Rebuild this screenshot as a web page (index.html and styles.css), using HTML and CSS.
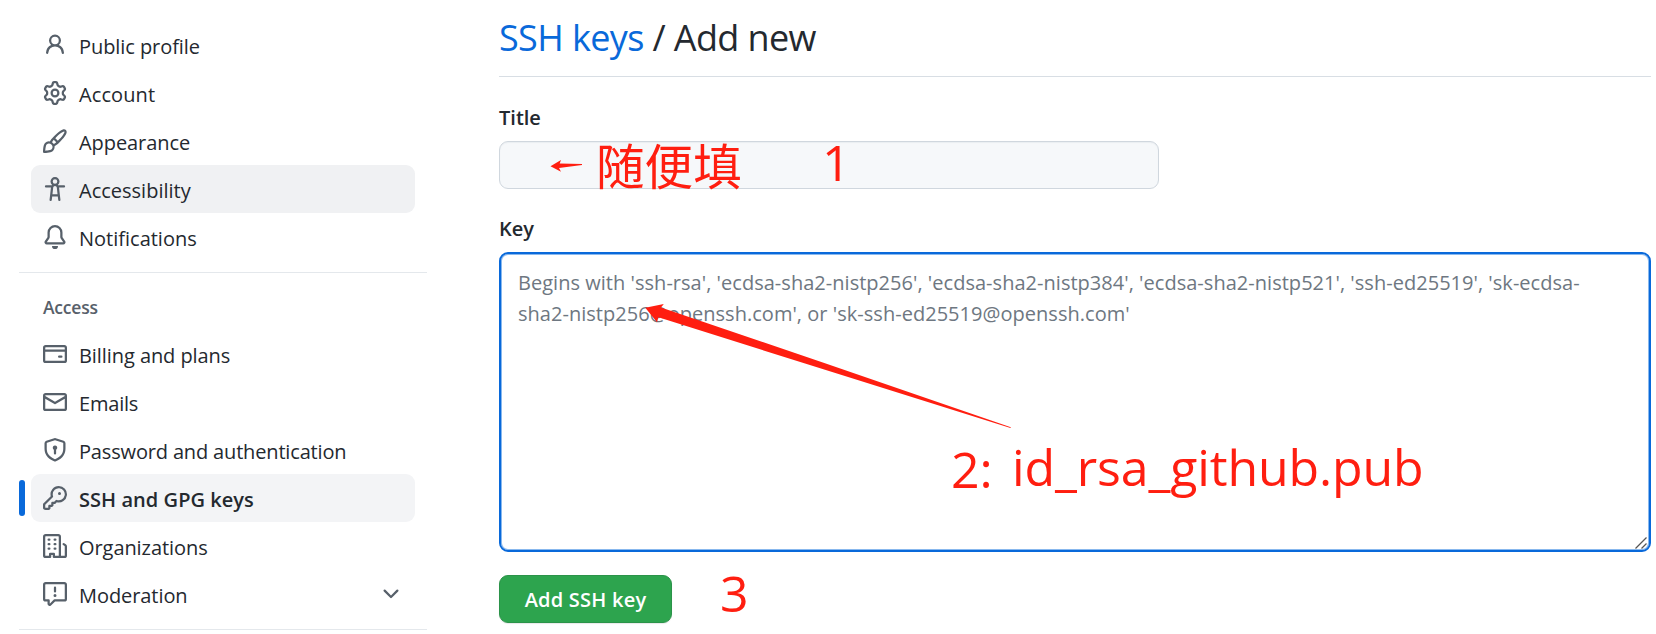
FILE: index.html
```html
<!DOCTYPE html>
<html lang="en">
<head>
<meta charset="utf-8">
<title>Add new SSH keys</title>
<link rel="stylesheet" href="styles.css">
</head>
<body>
<div class="page">
  <nav class="sidebar">
    <ul class="nav-list">
      <li class="nav-item"><svg class="icon" viewBox="0 0 16 16"><path d="M10.561 8.073a6.005 6.005 0 0 1 3.432 5.142.75.75 0 1 1-1.498.07 4.5 4.5 0 0 0-8.99 0 .75.75 0 0 1-1.498-.07 6.004 6.004 0 0 1 3.431-5.142 3.999 3.999 0 1 1 5.123 0ZM10.5 5a2.5 2.5 0 1 0-5 0 2.5 2.5 0 0 0 5 0Z"/></svg><span class="label profile">Public profile</span></li>
      <li class="nav-item"><svg class="icon" viewBox="0 0 16 16"><path d="M8 0a8.2 8.2 0 0 1 .701.031C9.444.095 9.99.645 10.16 1.29l.288 1.107c.018.066.079.158.212.224.231.114.454.243.668.386.123.082.233.09.299.071l1.103-.303c.644-.176 1.392.021 1.82.63.27.385.506.792.704 1.218.315.675.111 1.422-.364 1.891l-.814.806c-.049.048-.098.147-.088.294.016.257.016.515 0 .772-.01.147.038.246.088.294l.814.806c.475.469.679 1.216.364 1.891a7.977 7.977 0 0 1-.704 1.217c-.428.61-1.176.807-1.82.63l-1.102-.302c-.067-.019-.177-.011-.3.071a5.909 5.909 0 0 1-.668.386c-.133.066-.194.158-.211.224l-.29 1.106c-.168.646-.715 1.196-1.458 1.26a8.006 8.006 0 0 1-1.402 0c-.743-.064-1.289-.614-1.458-1.26l-.289-1.106c-.018-.066-.079-.158-.212-.224a5.738 5.738 0 0 1-.668-.386c-.123-.082-.233-.09-.299-.071l-1.103.303c-.644.176-1.392-.021-1.82-.63a8.12 8.12 0 0 1-.704-1.218c-.315-.675-.111-1.422.363-1.891l.815-.806c.05-.048.098-.147.088-.294a6.214 6.214 0 0 1 0-.772c.01-.147-.038-.246-.088-.294l-.815-.806C.635 6.045.431 5.298.746 4.623a7.92 7.92 0 0 1 .704-1.217c.428-.61 1.176-.807 1.82-.63l1.102.302c.067.019.177.011.3-.071.214-.143.437-.272.668-.386.133-.066.194-.158.211-.224l.29-1.106C6.009.645 6.556.095 7.299.03 7.53.01 7.764 0 8 0Zm-.571 1.525c-.036.003-.108.036-.137.146l-.289 1.105c-.147.561-.549.967-.998 1.189-.173.086-.34.183-.5.29-.417.278-.97.423-1.529.27l-1.103-.303c-.109-.03-.175.016-.195.045-.22.312-.412.644-.573.99-.014.031-.021.11.059.19l.815.806c.411.406.562.957.53 1.456a4.709 4.709 0 0 0 0 .582c.032.499-.119 1.05-.53 1.456l-.815.806c-.081.08-.073.159-.059.19.162.346.353.677.573.989.02.03.085.076.195.046l1.102-.303c.56-.153 1.113-.008 1.53.27.161.107.328.204.501.29.447.222.85.629.997 1.189l.289 1.105c.029.109.101.143.137.146a6.6 6.6 0 0 0 1.142 0c.036-.003.108-.036.137-.146l.289-1.105c.147-.561.549-.967.998-1.189.173-.086.34-.183.5-.29.417-.278.97-.423 1.529-.27l1.103.303c.109.029.175-.016.195-.045.22-.313.411-.644.573-.99.014-.031.021-.11-.059-.19l-.815-.806c-.411-.406-.562-.957-.53-1.456a4.709 4.709 0 0 0 0-.582c-.032-.499.119-1.05.53-1.456l.815-.806c.081-.08.073-.159.059-.19a6.464 6.464 0 0 0-.573-.989c-.02-.03-.085-.076-.195-.046l-1.102.303c-.56.153-1.113.008-1.53-.27a4.44 4.44 0 0 0-.501-.29c-.447-.222-.85-.629-.997-1.189l-.289-1.105c-.029-.11-.101-.143-.137-.146a6.6 6.6 0 0 0-1.142 0ZM11 8a3 3 0 1 1-6 0 3 3 0 0 1 6 0ZM9.5 8a1.5 1.5 0 1 0-3.001.001A1.5 1.5 0 0 0 9.5 8Z"/></svg><span class="label account">Account</span></li>
      <li class="nav-item"><svg class="icon" viewBox="0 0 16 16"><path d="M11.134 1.535c.7-.509 1.416-.942 2.076-1.155.649-.21 1.463-.267 2.069.34.603.601.568 1.411.368 2.07-.202.668-.624 1.39-1.125 2.096-1.011 1.424-2.496 2.987-3.775 4.249-1.098 1.084-2.132 1.839-3.04 2.3a3.744 3.744 0 0 1-1.055 3.217c-.431.431-1.065.691-1.657.861-.614.177-1.294.287-1.914.357A21.151 21.151 0 0 1 .797 16H.743l.007-.75H.749L.742 16a.75.75 0 0 1-.743-.742l.743-.008-.742.007v-.054a21.25 21.25 0 0 1 .13-2.284c.067-.647.187-1.287.358-1.914.17-.591.43-1.226.86-1.657a3.746 3.746 0 0 1 3.227-1.054c.466-.893 1.225-1.907 2.314-2.982 1.271-1.255 2.833-2.75 4.245-3.777ZM1.62 13.089c-.051.464-.086.929-.104 1.395.466-.018.932-.053 1.396-.104a10.511 10.511 0 0 0 1.668-.309c.526-.151.856-.325 1.011-.48a2.25 2.25 0 1 0-3.182-3.182c-.155.155-.329.485-.48 1.01a10.515 10.515 0 0 0-.309 1.67Zm10.396-10.34c-1.224.89-2.605 2.189-3.822 3.384l1.718 1.718c1.21-1.205 2.51-2.597 3.387-3.833.47-.662.78-1.227.912-1.662.134-.444.032-.551.009-.575h-.001V1.78c-.014-.014-.113-.113-.548.027-.432.14-.995.462-1.655.942Zm-4.832 7.266-.001.001a9.859 9.859 0 0 0 1.63-1.142L7.155 7.216a9.7 9.7 0 0 0-1.161 1.607c.482.302.889.71 1.19 1.192Z"/></svg><span class="label appearance">Appearance</span></li>
      <li class="nav-item hovered"><svg class="icon" viewBox="0 0 16 16"><path d="M9.923 5.302c.063.063.122.129.178.198H14A.75.75 0 0 1 14 7h-3.3l.578 5.163.362 2.997a.75.75 0 0 1-1.49.18L9.868 13H6.132l-.282 2.34a.75.75 0 0 1-1.49-.18l.362-2.997L5.3 7H2a.75.75 0 0 1 0-1.5h3.9a2.54 2.54 0 0 1 .176-.198 3 3 0 1 1 3.847 0ZM9.2 7.073h-.001a1.206 1.206 0 0 0-2.398 0L6.305 11.5h3.39ZM9.5 3a1.5 1.5 0 1 0-3.001.001A1.5 1.5 0 0 0 9.5 3Z"/></svg><span class="label accessibility">Accessibility</span></li>
      <li class="nav-item"><svg class="icon" viewBox="0 0 16 16"><path d="M8 16a2 2 0 0 0 1.985-1.75c.017-.137-.097-.25-.235-.25h-3.5c-.138 0-.252.113-.235.25A2 2 0 0 0 8 16ZM3 5a5 5 0 0 1 10 0v2.947c0 .05.015.098.042.139l1.703 2.555A1.519 1.519 0 0 1 13.482 13H2.518a1.516 1.516 0 0 1-1.263-2.36l1.703-2.554A.255.255 0 0 0 3 7.947Zm5-3.5A3.5 3.5 0 0 0 4.5 5v2.947c0 .346-.102.683-.294.97l-1.703 2.556a.017.017 0 0 0-.003.01l.001.006c0 .002.002.004.004.006l.006.004.007.001h10.964l.007-.001.006-.004.004-.006.001-.007a.017.017 0 0 0-.003-.01l-1.703-2.554a1.745 1.745 0 0 1-.294-.97V5A3.5 3.5 0 0 0 8 1.5Z"/></svg><span class="label notifications">Notifications</span></li>
    </ul>
    <h3 class="nav-heading">Access</h3>
    <ul class="nav-list">
      <li class="nav-item"><svg class="icon" viewBox="0 0 16 16"><path d="M10.75 9a.75.75 0 0 0 0 1.5h1.5a.75.75 0 0 0 0-1.5h-1.5Z"/><path d="M0 3.75C0 2.784.784 2 1.75 2h12.5c.966 0 1.75.784 1.75 1.75v8.5A1.75 1.75 0 0 1 14.25 14H1.75A1.75 1.75 0 0 1 0 12.25ZM14.5 6.5h-13v5.75c0 .138.112.25.25.25h12.5a.25.25 0 0 0 .25-.25Zm0-2.75a.25.25 0 0 0-.25-.25H1.75a.25.25 0 0 0-.25.25V5h13Z"/></svg><span class="label billing">Billing and plans</span></li>
      <li class="nav-item"><svg class="icon" viewBox="0 0 16 16"><path d="M1.75 2h12.5c.966 0 1.75.784 1.75 1.75v8.5A1.75 1.75 0 0 1 14.25 14H1.75A1.75 1.75 0 0 1 0 12.25v-8.5C0 2.784.784 2 1.75 2ZM1.5 5.809v6.442c0 .138.112.25.25.25h12.5a.25.25 0 0 0 .25-.25V5.809L8.38 9.397a.75.75 0 0 1-.76 0Zm13-1.74v-.319a.25.25 0 0 0-.25-.25H1.75a.25.25 0 0 0-.25.25v.319L8 7.88Z"/></svg><span class="label emails">Emails</span></li>
      <li class="nav-item"><svg class="icon" viewBox="0 0 16 16"><path d="m8.533.133 5.25 1.68A1.75 1.75 0 0 1 15 3.48V7c0 1.566-.32 3.182-1.303 4.682-.983 1.498-2.585 2.813-5.032 3.855a1.697 1.697 0 0 1-1.33 0c-2.447-1.042-4.049-2.357-5.032-3.855C1.32 10.182 1 8.566 1 7V3.48a1.755 1.755 0 0 1 1.217-1.667l5.25-1.68a1.748 1.748 0 0 1 1.066 0Zm-.61 1.429.001.001-5.25 1.68a.251.251 0 0 0-.174.237V7c0 1.36.275 2.666 1.057 3.859.784 1.194 2.121 2.342 4.366 3.298a.196.196 0 0 0 .154 0c2.245-.957 3.582-2.103 4.366-3.297C13.225 9.666 13.5 8.358 13.5 7V3.48a.25.25 0 0 0-.174-.238l-5.25-1.68a.25.25 0 0 0-.153 0ZM9.5 6.5c0 .536-.286 1.032-.75 1.3v2.45a.75.75 0 0 1-1.5 0V7.8A1.5 1.5 0 1 1 9.5 6.5Z"/></svg><span class="label password">Password and authentication</span></li>
      <li class="nav-item current"><svg class="icon" viewBox="0 0 16 16"><path d="M10.5 0a5.499 5.499 0 1 1-1.288 10.848l-.932.932a.749.749 0 0 1-.53.22H7v.75a.749.749 0 0 1-.22.53l-.5.5a.749.749 0 0 1-.53.22H5v.75a.749.749 0 0 1-.22.53l-.5.5a.749.749 0 0 1-.53.22h-2A1.75 1.75 0 0 1 0 14.25v-2c0-.199.079-.389.22-.53l4.932-4.932A5.5 5.5 0 0 1 10.5 0Zm-4 5.5c-.001.431.069.86.205 1.269a.75.75 0 0 1-.181.768L1.5 12.56v1.69c0 .138.112.25.25.25h1.69l.06-.06v-1.19a.75.75 0 0 1 .75-.75h1.19l.06-.06v-1.19a.75.75 0 0 1 .75-.75h1.19l1.023-1.025a.75.75 0 0 1 .768-.18A4 4 0 1 0 6.5 5.5ZM11 6a1 1 0 1 1 0-2 1 1 0 0 1 0 2Z"/></svg><span class="label ssh">SSH and GPG keys</span></li>
      <li class="nav-item"><svg class="icon" viewBox="0 0 16 16"><path d="M1.75 16A1.75 1.75 0 0 1 0 14.25V1.75C0 .784.784 0 1.75 0h8.5C11.216 0 12 .784 12 1.75v12.5c0 .085-.006.168-.018.25h2.268a.25.25 0 0 0 .25-.25V8.285a.25.25 0 0 0-.111-.208l-1.055-.703a.749.749 0 1 1 .832-1.248l1.055.703c.487.325.779.871.779 1.456v5.965A1.75 1.75 0 0 1 14.25 16h-3.5a.766.766 0 0 1-.197-.026c-.099.017-.2.026-.303.026h-3a.75.75 0 0 1-.75-.75V14h-1v1.25a.75.75 0 0 1-.75.75Zm-.25-1.75c0 .138.112.25.25.25H4v-1.25a.75.75 0 0 1 .75-.75h2.5a.75.75 0 0 1 .75.75v1.25h2.25a.25.25 0 0 0 .25-.25V1.75a.25.25 0 0 0-.25-.25h-8.5a.25.25 0 0 0-.25.25ZM3.75 6h.5a.75.75 0 0 1 0 1.5h-.5a.75.75 0 0 1 0-1.5ZM3 3.75A.75.75 0 0 1 3.75 3h.5a.75.75 0 0 1 0 1.5h-.5A.75.75 0 0 1 3 3.75Zm4 3A.75.75 0 0 1 7.75 6h.5a.75.75 0 0 1 0 1.5h-.5A.75.75 0 0 1 7 6.75ZM7.75 3h.5a.75.75 0 0 1 0 1.5h-.5a.75.75 0 0 1 0-1.5ZM3 9.75A.75.75 0 0 1 3.75 9h.5a.75.75 0 0 1 0 1.5h-.5A.75.75 0 0 1 3 9.75ZM7.75 9h.5a.75.75 0 0 1 0 1.5h-.5a.75.75 0 0 1 0-1.5Z"/></svg><span class="label organizations">Organizations</span></li>
      <li class="nav-item"><svg class="icon" viewBox="0 0 16 16"><path d="M0 1.75C0 .784.784 0 1.75 0h12.5C15.216 0 16 .784 16 1.75v9.5A1.75 1.75 0 0 1 14.25 13H8.06l-2.573 2.573A1.458 1.458 0 0 1 3 14.543V13H1.75A1.75 1.75 0 0 1 0 11.25Zm1.75-.25a.25.25 0 0 0-.25.25v9.5c0 .138.112.25.25.25h2a.75.75 0 0 1 .75.75v2.19l2.72-2.72a.749.749 0 0 1 .53-.22h6.5a.25.25 0 0 0 .25-.25v-9.5a.25.25 0 0 0-.25-.25Zm7 2.25v2.5a.75.75 0 0 1-1.5 0v-2.5a.75.75 0 0 1 1.5 0ZM9 9a1 1 0 1 1-2 0 1 1 0 0 1 2 0Z"/></svg><span class="label moderation">Moderation</span><svg class="icon chevron" viewBox="0 0 16 16"><path d="M12.78 5.22a.749.749 0 0 1 0 1.06l-4.25 4.25a.749.749 0 0 1-1.06 0L3.22 6.28a.749.749 0 1 1 1.06-1.06L8 8.939l3.72-3.719a.749.749 0 0 1 1.06 0Z"/></svg></li>
    </ul>
  </nav>
  <main class="content">
    <h2 class="page-title"><a class="crumb">SSH keys</a> / Add new</h2>
    <label class="field-label title-label" for="title">Title</label>
    <input class="title-input" id="title" type="text">
    <label class="field-label key-label" for="key">Key</label>
    <div class="key-box">
      <textarea class="key-input" id="key" placeholder="Begins with 'ssh-rsa', 'ecdsa-sha2-nistp256', 'ecdsa-sha2-nistp384', 'ecdsa-sha2-nistp521', 'ssh-ed25519', 'sk-ecdsa-sha2-nistp256@openssh.com', or 'sk-ssh-ed25519@openssh.com'"></textarea>
      <svg class="grip" viewBox="0 0 12 12"><path d="M.5 11.5 11.5.5M6.5 11.5l5-5"/></svg>
    </div>
    <button class="submit" type="button"><span>Add SSH key</span></button>
  </main>
  <svg class="arrows" width="1656" height="634" viewBox="0 0 1656 634">
    <path d="M550.5 166.3 561 160 559.7 163.6 582 164 582 165 559 168 561 171.7Z"/>
    <path d="M645.3 307.8 663.8 304 661 307.5 825 363.3 1010.8 427.2 1010.5 428 825 369.7 658.4 317.3 657 322.3Z"/>
  </svg>
  <span class="note note-fill">随便填</span>
  <span class="note note-one">1</span>
  <span class="note note-two">2:</span>
  <span class="note note-file">id_rsa_github.pub</span>
  <span class="note note-three">3</span>
</div>
</body>
</html>
```
FILE: styles.css
```css
* { box-sizing: border-box; }
body {
  margin: 0;
  background: #fff;
  color: #24292f;
  font-family: "Open Sans", "Noto Sans", "Noto Sans CJK SC", sans-serif;
  font-size: 20px;
}
.page {
  position: relative;
  display: flex;
  width: 1656px;
  height: 634px;
  overflow: hidden;
}
.sidebar {
  width: 408px;
  margin-left: 19px;
  padding-top: 21px;
  flex: none;
}
.nav-list {
  list-style: none;
  margin: 0;
  padding: 0 12px 11px;
  border-bottom: 1px solid #e4e8ec;
}
.nav-item {
  position: relative;
  display: flex;
  align-items: flex-start;
  gap: 12px;
  height: 48px;
  padding: 12px;
  border-radius: 9px;
}
.hovered { background: #f0f1f3; }
.current { background: #f3f4f6; font-weight: 600; }
.current::before {
  content: "";
  position: absolute;
  left: -12px;
  top: 6px;
  width: 6px;
  height: 36px;
  border-radius: 3px;
  background: #0969da;
}
.icon {
  width: 24px;
  height: 24px;
  flex: none;
  fill: #57606a;
}
.label {
  line-height: 28px;
  white-space: nowrap;
}
.profile, .appearance, .organizations, .moderation, .billing { letter-spacing: -.07px; }
.account { letter-spacing: .1px; }
.emails { letter-spacing: -.2px; }
.password { letter-spacing: -.16px; }
.ssh { letter-spacing: .05px; }
.chevron { margin-left: auto; }
.nav-heading {
  margin: 0;
  padding: 22px 24px 0;
  height: 57px;
  font-size: 17.5px;
  letter-spacing: -.2px;
  line-height: 25px;
  font-weight: 600;
  color: #57606a;
}
.content {
  display: flex;
  flex-direction: column;
  align-items: flex-start;
  width: 1152px;
  margin-left: 72px;
}
.page-title {
  width: 100%;
  height: 77px;
  margin: 0;
  padding-top: 13px;
  border-bottom: 1px solid #d8dee4;
  font-size: 36px;
  letter-spacing: -.62px;
  line-height: 50px;
  font-weight: 400;
  white-space: pre;
}
.crumb { color: #0969da; }
.field-label {
  font-weight: 600;
  line-height: 30px;
}
.title-label { margin-top: 26px; }
.title-input {
  width: 660px;
  height: 48px;
  margin-top: 8px;
  border: 1px solid #d0d7de;
  border-radius: 9px;
  background: #f6f8fa;
  box-shadow: inset 0 1px 1px rgba(208, 215, 222, .3);
}
.key-label { margin-top: 25px; }
.key-box {
  position: relative;
  width: 1152px;
  height: 300px;
  margin-top: 8px;
}
.key-input {
  display: block;
  width: 100%;
  height: 100%;
  padding: 13px 50px 13px 17px;
  border: 2px solid #0969da;
  border-radius: 9px;
  outline: none;
  box-shadow: inset 0 0 0 1px #88b8ee;
  background: #fff;
  font: inherit;
  letter-spacing: .03px;
  line-height: 31px;
  resize: none;
}
.key-input::placeholder { color: #6e7781; }
.grip {
  position: absolute;
  right: 4px;
  bottom: 3px;
  width: 12px;
  height: 12px;
  fill: none;
  stroke: #555;
  stroke-width: 1.3;
}
.submit {
  display: flex;
  align-items: center;
  justify-content: center;
  width: 173px;
  height: 48px;
  margin-top: 23px;
  padding: 0;
  border: 1px solid #2b9349;
  border-radius: 9px;
  background: #2da44e;
  box-shadow: 0 1px 1px rgba(27, 31, 36, .1);
  color: #fff;
  font: inherit;
  font-weight: 600;
  letter-spacing: .22px;
}
.arrows {
  position: absolute;
  left: 0;
  top: 0;
  fill: #ff1e10;
  pointer-events: none;
}
.note {
  position: absolute;
  color: #ff1e10;
  font-size: 50px;
  line-height: 60px;
  white-space: nowrap;
}
.note-fill { left: 596px; top: 134px; font-family: "Noto Sans CJK SC", sans-serif; font-size: 48.6px; }
.note-one { left: 822px; top: 132px; }
.note-two { left: 951px; top: 439px; }
.note-file { left: 1012px; top: 437px; letter-spacing: -.12px; }
.note-three { left: 720px; top: 563px; }
```
